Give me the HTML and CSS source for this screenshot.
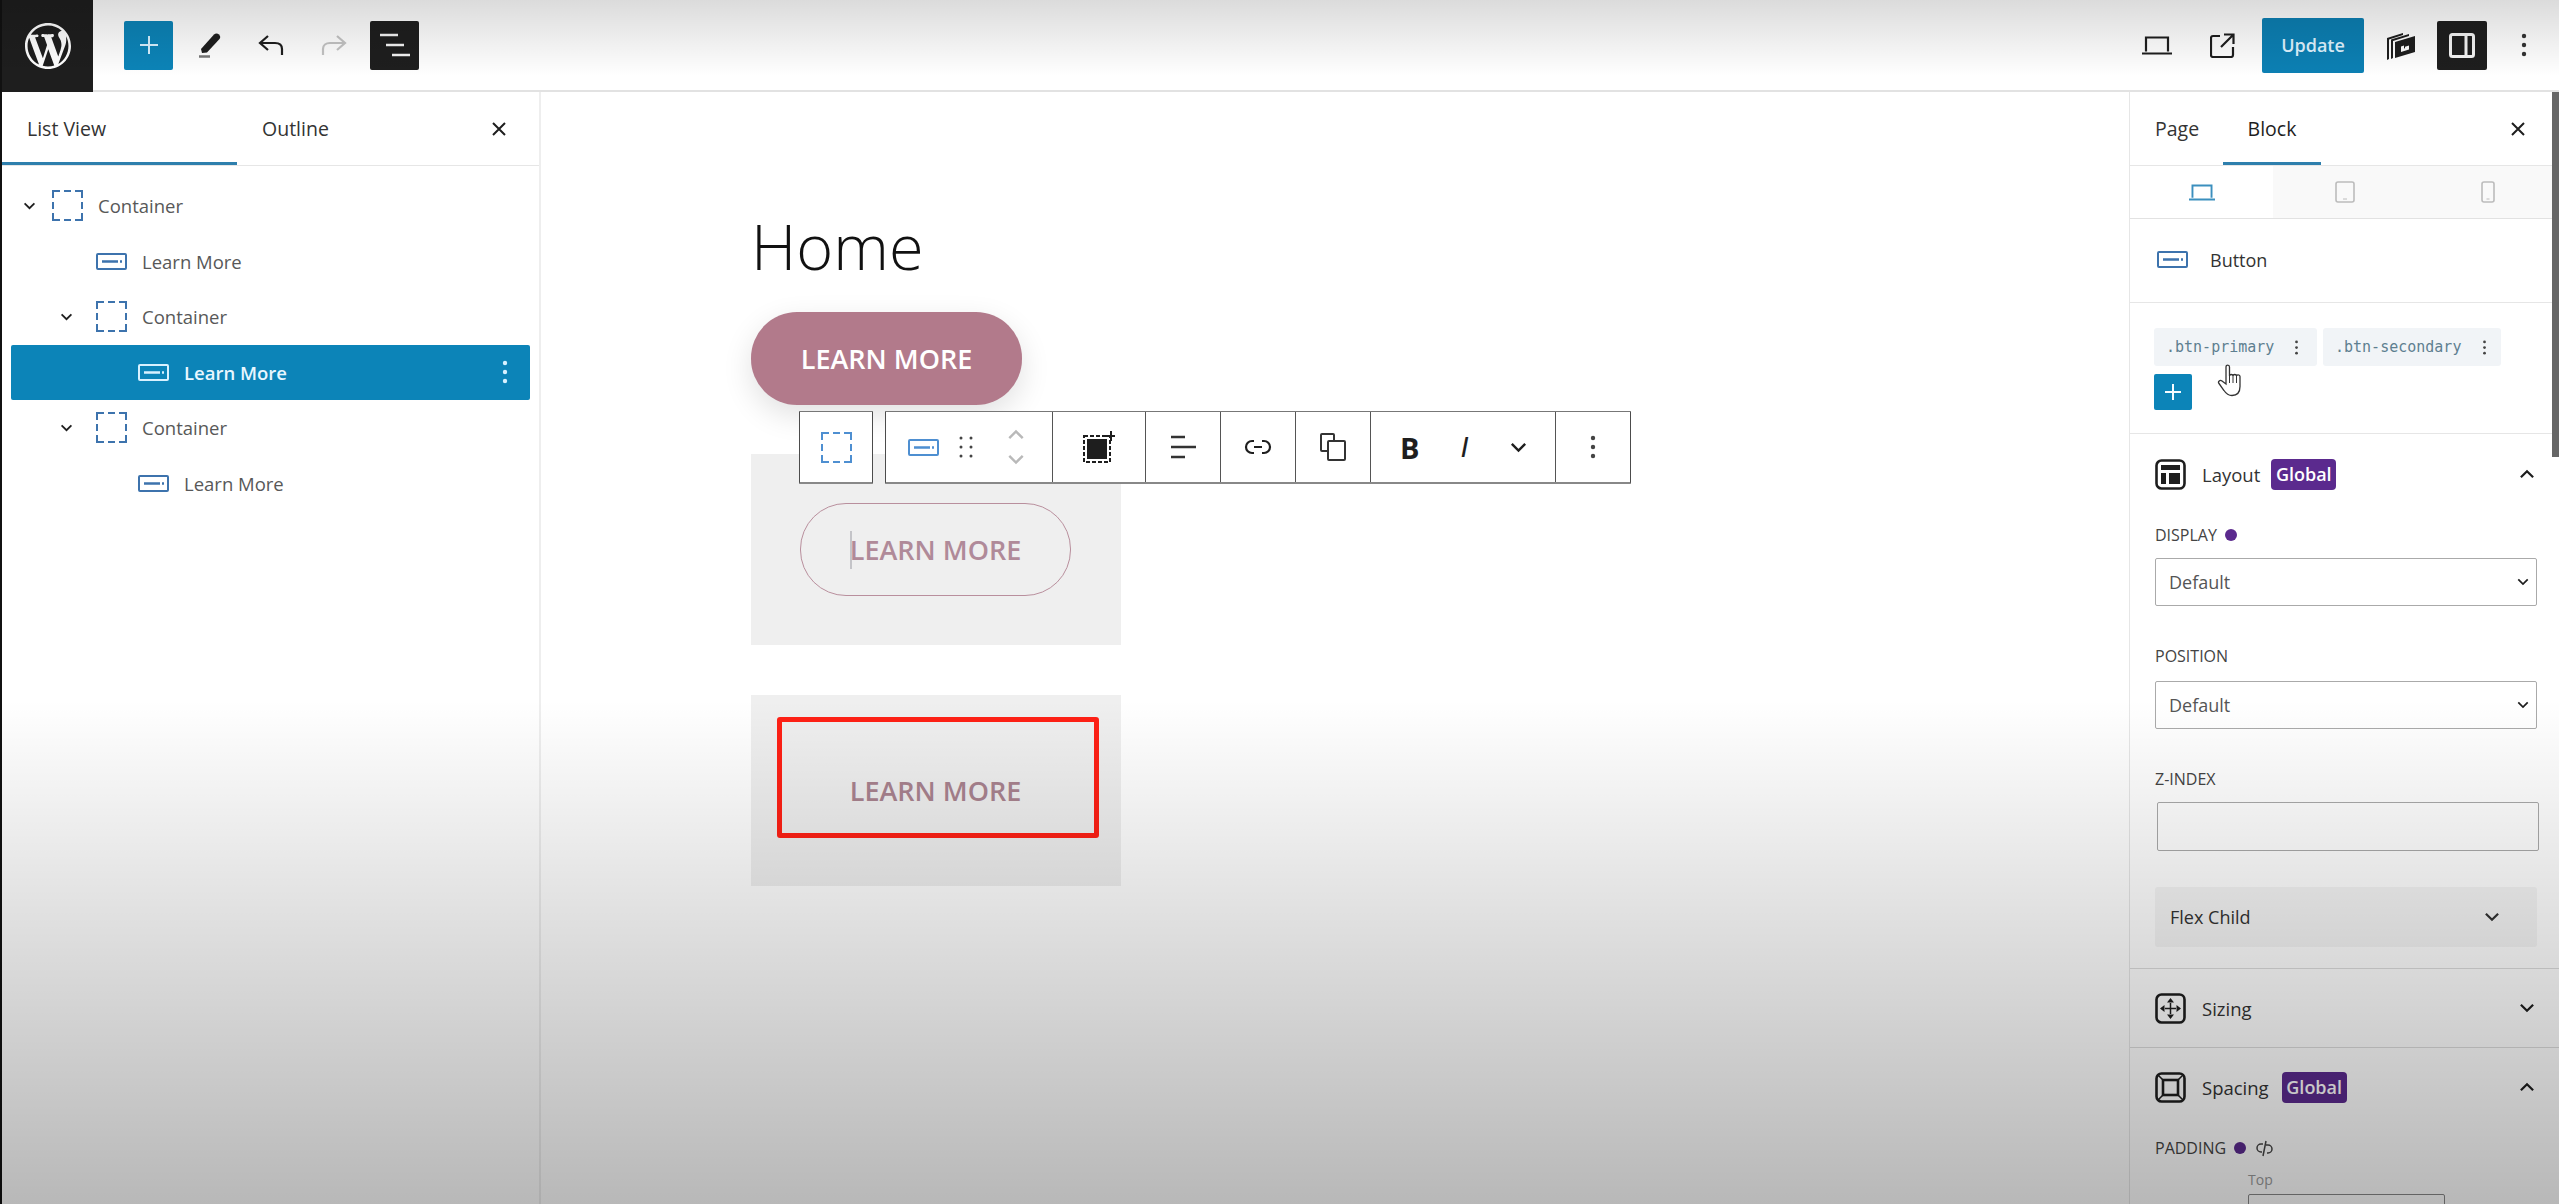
FILE: index.html
```html
<!DOCTYPE html>
<html lang="en">
<head>
    <meta charset="UTF-8">
    <title>Edit Page</title>
    <link rel="stylesheet" href="styles.css">
</head>
<body>
    <svg class="defs" width="0" height="0">
        <symbol id="i-container" viewBox="0 0 31 31">
            <path d="M1 8V1h7M12 1h7M23 1h7v7M30 12v7M30 23v7h-7M19 30h-7M8 30H1v-7M1 19v-7" fill="none" stroke="currentColor" stroke-width="2"/>
        </symbol>
        <symbol id="i-button" viewBox="0 0 31 17">
            <rect x="1" y="1" width="29" height="15" rx="1" fill="none" stroke="currentColor" stroke-width="2"/>
            <path d="M6 8.5h16M24 8.5h2" fill="none" stroke="currentColor" stroke-width="2.4"/>
        </symbol>
        <symbol id="i-down" viewBox="0 0 14 9">
            <path d="M1.5 1.5 7 7l5.500-5.500" fill="none" stroke="currentColor" stroke-width="2"/>
        </symbol>
        <symbol id="i-up" viewBox="0 0 14 9">
            <path d="M1.500 7.500 7 2l5.500 5.500" fill="none" stroke="currentColor" stroke-width="2"/>
        </symbol>
        <symbol id="i-close" viewBox="0 0 16 16">
            <path d="M2 2l12 12M14 2 2 14" fill="none" stroke="currentColor" stroke-width="2"/>
        </symbol>
        <symbol id="i-dots" viewBox="0 0 6 24">
            <circle cx="3" cy="3" r="2.200" fill="currentColor"/>
            <circle cx="3" cy="12" r="2.200" fill="currentColor"/>
            <circle cx="3" cy="21" r="2.200" fill="currentColor"/>
        </symbol>
        <symbol id="i-laptop" viewBox="0 0 30 19">
            <path d="M4 15.500V1.500h22v14M0 17.500h30" fill="none" stroke="currentColor" stroke-width="2.200"/>
        </symbol>
    </svg>

    <div class="app">
        <header class="topbar">
            <div class="wp-logo">
                <svg width="46" height="46" viewBox="0 0 20 20"><path fill="#fff" d="M20 10c0-5.510-4.490-10-10-10C4.480 0 0 4.490 0 10c0 5.520 4.480 10 10 10 5.510 0 10-4.480 10-10zM7.780 15.370L4.370 6.220c.550-.020 1.170-.080 1.170-.080.500-.060.440-1.130-.060-1.110 0 0-1.450.110-2.370.110-.180 0-.370 0-.580-.010C4.120 2.690 6.870 1.110 10 1.110c2.330 0 4.450.870 6.050 2.340-.680-.110-1.650.390-1.650 1.580 0 .740.450 1.360.900 2.100.350.610.550 1.360.550 2.460 0 1.490-1.400 5-1.400 5l-3.030-8.370c.540-.020.820-.170.820-.170.500-.050.440-1.250-.060-1.220 0 0-1.440.120-2.380.120-.870 0-2.330-.120-2.330-.120-.500-.030-.560 1.200-.060 1.220l.920.080 1.260 3.410zM17.410 10c.240-.640.740-1.870.430-4.250.700 1.290 1.050 2.710 1.050 4.250 0 3.290-1.730 6.240-4.400 7.780.970-2.590 1.940-5.200 2.920-7.780zM6.100 18.090C3.120 16.650 1.110 13.530 1.110 10c0-1.300.230-2.480.720-3.590C3.250 10.300 4.670 14.200 6.100 18.090zm4.030-6.630l2.580 6.980c-.860.290-1.760.450-2.710.450-.790 0-1.570-.110-2.290-.330.810-2.380 1.620-4.740 2.420-7.100z"/></svg>
            </div>
            <div class="bar-btn add-btn">
                <svg width="20" height="20" viewBox="0 0 20 20"><path d="M10 1v18M1 10h18" stroke="#d8f1ff" stroke-width="2"/></svg>
            </div>
            <div class="bar-icon pencil">
                <svg width="24" height="26" viewBox="0 0 24 26"><path d="M2 17 15 2.500c1.500-1.500 3.500-1.500 5 0s1.500 3 .5 4.500L8 20.500l-5 .5z" fill="#1e1e1e"/><path d="M0 24.500h11" stroke="#777" stroke-width="2.500"/></svg>
            </div>
            <div class="bar-icon undo">
                <svg width="26" height="22" viewBox="0 0 26 22"><path d="M10 2 2 9l8 7M2 9h15c4 0 7 2 7 6v6" fill="none" stroke="#1e1e1e" stroke-width="2.200"/></svg>
            </div>
            <div class="bar-icon redo">
                <svg width="26" height="22" viewBox="0 0 26 22"><path d="M16 2l8 7-8 7M24 9H9c-4 0-7 2-7 6v6" fill="none" stroke="#c4c4c4" stroke-width="2.200"/></svg>
            </div>
            <div class="bar-btn list-btn">
                <svg width="30" height="24" viewBox="0 0 30 24"><path d="M0 2h18M6 12h18M12 22h18" stroke="#f4f4f4" stroke-width="2.400"/></svg>
            </div>

            <div class="bar-right">
                <div class="bar-icon laptop">
                    <svg width="30" height="19"><use href="#i-laptop"/></svg>
                </div>
                <div class="bar-icon external">
                    <svg width="25" height="25" viewBox="0 0 25 25"><path d="M10 3H3c-1 0-2 1-2 2v17c0 1 1 2 2 2h18c1 0 2-1 2-2v-8M11 14 23 2M14 1.500h9.500V11" fill="none" stroke="#1e1e1e" stroke-width="2.200"/></svg>
                </div>
                <div class="update-btn">Update</div>
                <div class="bar-icon gs-logo">
                    <svg width="28" height="30" viewBox="0 0 28 30"><path d="M0 8 16 3v2L2 9.500V29l-2 1zM4 9.500 22 4v2L6 11v17l-2 1z" fill="#1e1e1e"/><path fill-rule="evenodd" d="M8 12 28 6v16L8 28zM14 16.500v5.500l8-2.500v-4l-4 1.200v1.500l-1 .3v-3z" fill="#1e1e1e"/></svg>
                </div>
                <div class="bar-btn side-btn">
                    <svg width="26" height="25" viewBox="0 0 26 25"><rect x="1.500" y="1.500" width="23" height="22" rx="2" fill="none" stroke="#f4f4f4" stroke-width="3"/><path d="M17 2v21" stroke="#f4f4f4" stroke-width="3"/></svg>
                </div>
                <div class="bar-icon more">
                    <svg width="6" height="26"><use href="#i-dots"/></svg>
                </div>
            </div>
        </header>

        <div class="workspace">
            <aside class="list-panel">
                <div class="tabs list-tabs">
                    <div class="tab tab-list active">List View</div>
                    <div class="tab tab-outline">Outline</div>
                    <svg class="tab-close" width="16" height="16"><use href="#i-close"/></svg>
                </div>
                <ul class="tree">
                    <li class="tree-row lv0">
                        <svg class="caret" width="13" height="8" viewBox="0 0 14 9"><use href="#i-down"/></svg>
                        <svg class="node-icon" width="31" height="31"><use href="#i-container"/></svg>
                        <span>Container</span>
                    </li>
                    <li class="tree-row lv1-leaf">
                        <svg class="node-icon" width="31" height="17"><use href="#i-button"/></svg>
                        <span>Learn More</span>
                    </li>
                    <li class="tree-row lv1">
                        <svg class="caret" width="13" height="8" viewBox="0 0 14 9"><use href="#i-down"/></svg>
                        <svg class="node-icon" width="31" height="31"><use href="#i-container"/></svg>
                        <span>Container</span>
                    </li>
                    <li class="tree-row lv2-leaf selected">
                        <svg class="node-icon" width="31" height="17"><use href="#i-button"/></svg>
                        <span>Learn More</span>
                        <svg class="row-more" width="6" height="24"><use href="#i-dots"/></svg>
                    </li>
                    <li class="tree-row lv1">
                        <svg class="caret" width="13" height="8" viewBox="0 0 14 9"><use href="#i-down"/></svg>
                        <svg class="node-icon" width="31" height="31"><use href="#i-container"/></svg>
                        <span>Container</span>
                    </li>
                    <li class="tree-row lv2-leaf">
                        <svg class="node-icon" width="31" height="17"><use href="#i-button"/></svg>
                        <span>Learn More</span>
                    </li>
                </ul>
            </aside>

            <main class="canvas">
                <h1 class="page-title">Home</h1>
                <div class="btn-primary">LEARN MORE</div>
                <div class="demo-box">
                    <div class="btn-secondary"><i class="text-caret"></i>LEARN MORE</div>
                </div>
                <div class="demo-box">
                    <div class="btn-plain">LEARN MORE</div>
                    <div class="red-mark"></div>
                </div>

                <div class="block-toolbar">
                    <div class="tool-group parent-group">
                        <svg class="tb-blue" width="31" height="31"><use href="#i-container"/></svg>
                    </div>
                    <div class="tool-group main-group">
                        <div class="tool move-tool">
                            <svg class="tb-blue" width="31" height="17"><use href="#i-button"/></svg>
                            <svg width="14" height="22" viewBox="0 0 14 22"><g fill="#444"><circle cx="2" cy="2" r="1.500"/><circle cx="12" cy="2" r="1.500"/><circle cx="2" cy="11" r="1.500"/><circle cx="12" cy="11" r="1.500"/><circle cx="2" cy="20" r="1.500"/><circle cx="12" cy="20" r="1.500"/></g></svg>
                            <div class="mover">
                                <svg width="18" height="11" viewBox="0 0 14 9"><use href="#i-up"/></svg>
                                <svg width="18" height="11" viewBox="0 0 14 9"><use href="#i-down"/></svg>
                            </div>
                        </div>
                        <div class="tool layout-tool">
                            <svg width="32" height="32" viewBox="0 0 32 32"><rect x="1" y="5" width="26" height="26" fill="none" stroke="#1e1e1e" stroke-width="2" stroke-dasharray="4 2"/><rect x="4" y="8" width="20" height="20" fill="#1e1e1e"/><path d="M28 0v10M23 5h9" stroke="#1e1e1e" stroke-width="2"/></svg>
                        </div>
                        <div class="tool align-tool">
                            <svg width="26" height="24" viewBox="0 0 26 24"><path d="M1 2h14M1 12h25M1 22h14" stroke="#333" stroke-width="2.400"/></svg>
                        </div>
                        <div class="tool link-tool">
                            <svg width="28" height="16" viewBox="0 0 28 16"><path d="M10 2H8a6 6 0 0 0 0 12h2M18 2h2a6 6 0 0 1 0 12h-2M10 8h8" fill="none" stroke="#1e1e1e" stroke-width="2.200"/></svg>
                        </div>
                        <div class="tool copy-tool">
                            <svg width="26" height="28" viewBox="0 0 26 28"><path d="M8 18H2c-.6 0-1-.4-1-1V2c0-.6.4-1 1-1h11c.6 0 1 .4 1 1v6" fill="none" stroke="#333" stroke-width="2"/><rect x="8" y="8" width="17" height="19" rx="1" fill="none" stroke="#333" stroke-width="2"/></svg>
                        </div>
                        <div class="tool format-tool">
                            <span class="fmt-b">B</span>
                            <span class="fmt-i">I</span>
                            <svg width="17" height="11" viewBox="0 0 14 9"><use href="#i-down"/></svg>
                        </div>
                        <div class="tool end-tool">
                            <svg width="6" height="24"><use href="#i-dots"/></svg>
                        </div>
                    </div>
                </div>
            </main>

            <aside class="side-panel">
                <div class="tabs side-tabs">
                    <div class="tab tab-page">Page</div>
                    <div class="tab tab-block active">Block</div>
                    <svg class="tab-close" width="16" height="16"><use href="#i-close"/></svg>
                </div>
                <div class="devices">
                    <div class="device current"><svg width="26" height="17"><use href="#i-laptop"/></svg></div>
                    <div class="device">
                        <svg width="20" height="22" viewBox="0 0 20 22"><rect x="1" y="1" width="18" height="20" rx="2" fill="none" stroke="currentColor" stroke-width="1.600"/><path d="M8 18h4" stroke="currentColor"/></svg>
                    </div>
                    <div class="device">
                        <svg width="14" height="22" viewBox="0 0 14 22"><rect x="1" y="1" width="12" height="20" rx="2" fill="none" stroke="currentColor" stroke-width="1.600"/><path d="M5.500 18h3" stroke="currentColor"/></svg>
                    </div>
                </div>
                <div class="block-name">
                    <svg width="31" height="17"><use href="#i-button"/></svg>
                    <span>Button</span>
                </div>
                <section class="classes">
                    <div class="chips">
                        <div class="chip chip-primary"><span>.btn-primary</span><svg width="5" height="15" viewBox="0 0 6 24"><use href="#i-dots"/></svg></div>
                        <div class="chip chip-secondary"><span>.btn-secondary</span><svg width="5" height="15" viewBox="0 0 6 24"><use href="#i-dots"/></svg></div>
                    </div>
                    <div class="chip-add">
                        <svg width="16" height="16" viewBox="0 0 16 16"><path d="M8 0v16M0 8h16" stroke="#f4fbff" stroke-width="2"/></svg>
                    </div>
                </section>
                <section class="group layout-group">
                    <div class="group-head">
                        <svg width="31" height="31" viewBox="0 0 31 31"><rect x="1.500" y="1.500" width="28" height="28" rx="5" fill="none" stroke="#1e1e1e" stroke-width="2.600"/><path d="M6 6h19v5H6zM6 14h5v11H6zM14 14h11v11H14z" fill="#1e1e1e"/></svg>
                        <span class="group-title">Layout</span>
                        <span class="badge">Global</span>
                        <svg class="group-caret" width="16" height="10" viewBox="0 0 14 9"><use href="#i-up"/></svg>
                    </div>
                    <div class="field-label display-label">DISPLAY <i class="dot"></i></div>
                    <div class="select"><span>Default</span><svg width="12" height="8" viewBox="0 0 14 9"><use href="#i-down"/></svg></div>
                    <div class="field-label">POSITION</div>
                    <div class="select position-select"><span>Default</span><svg width="12" height="8" viewBox="0 0 14 9"><use href="#i-down"/></svg></div>
                    <div class="field-label">Z-INDEX</div>
                    <div class="text-input"></div>
                    <div class="flex-child"><span>Flex Child</span><svg width="16" height="10" viewBox="0 0 14 9"><use href="#i-down"/></svg></div>
                </section>
                <section class="group sizing-group">
                    <div class="group-head">
                        <svg width="31" height="31" viewBox="0 0 31 31"><rect x="1.500" y="1.500" width="28" height="28" rx="5" fill="none" stroke="#1e1e1e" stroke-width="2.600"/><path d="M15.500 10v11M10 15.500h11" stroke="#1e1e1e" stroke-width="1.500"/><path d="M15.500 5l-3.500 4.500h7zM15.500 26l-3.500-4.500h7zM5 15.500l4.500-3.500v7zM26 15.500l-4.500-3.500v7z" fill="#1e1e1e"/></svg>
                        <span class="group-title">Sizing</span>
                        <svg class="group-caret" width="16" height="10" viewBox="0 0 14 9"><use href="#i-down"/></svg>
                    </div>
                </section>
                <section class="group spacing-group">
                    <div class="group-head">
                        <svg width="31" height="31" viewBox="0 0 31 31"><rect x="1.500" y="1.500" width="28" height="28" rx="5" fill="none" stroke="#1e1e1e" stroke-width="2.600"/><rect x="8" y="8" width="15" height="15" fill="none" stroke="#1e1e1e" stroke-width="2.600"/><path d="M3 3l5 5M28 3l-5 5M3 28l5-5M28 28l-5-5" stroke="#1e1e1e" stroke-width="1.500"/></svg>
                        <span class="group-title">Spacing</span>
                        <span class="badge">Global</span>
                        <svg class="group-caret" width="16" height="10" viewBox="0 0 14 9"><use href="#i-up"/></svg>
                    </div>
                    <div class="field-label padding-label">PADDING <i class="dot"></i>
                        <svg width="17" height="17" viewBox="0 0 17 17"><path d="M7 4H5a4 4 0 0 0 0 8h1M10 5h2a4 4 0 0 1 0 8h-1M10 1 7 16" fill="none" stroke="#444" stroke-width="1.500"/></svg>
                    </div>
                    <div class="box-top">
                        <div class="box-label">Top</div>
                        <div class="box-input"></div>
                    </div>
                </section>
                <div class="panel-scroll"></div>
            </aside>
        </div>
    </div>

    <svg class="hand" width="28" height="34" viewBox="0 0 28 34"><path d="M9 20V3c0-2.500 3.500-2.500 3.500 0v9c0-2 3.500-2 3.500 0 0-2 3.500-2 3.500 0 0-1.500 3.500-1.500 3.500.5v10c0 6-3 9-8 9-4 0-6-2-8-5l-5-7c-1.500-2 1-4 3-2.500z" fill="#fff" stroke="#333" stroke-width="1.300"/><path d="M12.500 12v7M16 12v7M19.500 12v7" stroke="#333" stroke-width="1"/></svg>
    <div class="video-shade"></div>
</body>
</html>
```

FILE: styles.css
```css
* {
    box-sizing: border-box;
}
html, body {
    margin: 0;
    padding: 0;
    height: 100%;
    overflow: hidden;
}
body {
    font-family: "Open Sans", "Liberation Sans", sans-serif;
    color: #1e1e1e;
    background-color: #fff;
    position: relative;
}
.defs {
    position: absolute;
}
.app {
    height: 1204px;
    display: flex;
    flex-direction: column;
    border-left: 2px solid #111;
}

/* top bar */
.topbar {
    height: 92px;
    flex: none;
    display: flex;
    align-items: center;
    border-bottom: 2px solid #e2e2e2;
    background-color: #fff;
}
.wp-logo {
    width: 91px;
    height: 92px;
    margin-bottom: -2px;
    background-color: #1e1e1e;
    display: flex;
    align-items: center;
    justify-content: center;
    flex: none;
}
.bar-btn {
    width: 49px;
    height: 49px;
    border-radius: 2px;
    display: flex;
    align-items: center;
    justify-content: center;
    flex: none;
}
.bar-icon {
    width: 40px;
    height: 49px;
    display: flex;
    align-items: center;
    justify-content: center;
    flex: none;
}
.add-btn {
    margin-left: 31px;
    background-color: #0c84b8;
}
.pencil {
    margin-left: 18px;
}
.undo {
    margin-left: 20px;
}
.redo {
    margin-left: 23px;
}
.list-btn {
    margin-left: 16px;
    background-color: #1e1e1e;
}
.bar-right {
    margin-left: auto;
    padding-right: 20px;
    display: flex;
    align-items: center;
}
.external {
    margin-left: 25px;
}
.update-btn {
    width: 102px;
    height: 55px;
    margin-left: 20px;
    background-color: #0c80b4;
    color: #dff3ff;
    border-radius: 2px;
    font-size: 18px;
    font-weight: 600;
    display: flex;
    align-items: center;
    justify-content: center;
}
.gs-logo {
    margin-left: 17px;
}
.side-btn {
    width: 50px;
    margin-left: 16px;
    background-color: #1e1e1e;
}
.more {
    width: 30px;
    margin-left: 22px;
    color: #333;
}

/* panels */
.workspace {
    flex: 1;
    display: flex;
    min-height: 0;
}
.list-panel {
    width: 539px;
    flex: none;
    border-right: 2px solid #eeeeee;
}
.tabs {
    height: 74px;
    display: flex;
    align-items: center;
    position: relative;
    border-bottom: 1px solid #e6e6e6;
    font-size: 19.500px;
}
.tab {
    height: 100%;
    display: flex;
    align-items: center;
    padding-top: 2px;
    color: #333;
    border-bottom: 3px solid transparent;
}
.tab.active {
    border-bottom-color: #2e7fad;
}
.tab-list {
    width: 235px;
    padding-left: 25px;
}
.tab-outline {
    padding-left: 25px;
}
.tab-close {
    position: absolute;
    top: 29px;
    color: #1e1e1e;
}
.list-tabs .tab-close {
    left: 489px;
}
.side-tabs .tab-close {
    left: 380px;
}
.tree {
    list-style: none;
    margin: 0;
    padding: 12px 9px 0 9px;
}
.tree-row {
    height: 55.5px;
    display: flex;
    align-items: center;
    font-size: 18.5px;
    color: #585858;
    border-radius: 2px;
}
.tree-row .node-icon {
    color: #3d73ad;
    flex: none;
    margin-right: 15px;
}
.caret {
    flex: none;
    color: #1e1e1e;
}
.lv0 {
    padding-left: 12px;
}
.lv0 .caret {
    margin-right: 16px;
}
.lv1 {
    padding-left: 49px;
}
.lv1 .caret {
    margin-right: 23px;
}
.lv1-leaf {
    padding-left: 85px;
}
.lv2-leaf {
    padding-left: 127px;
}
.tree-row.selected {
    background-color: #0c84b8;
    color: #e8f7ff;
    font-weight: 600;
}
.tree-row.selected .node-icon {
    color: #d8f1ff;
}
.row-more {
    margin-left: auto;
    margin-right: 22px;
    color: #d8f1ff;
}

/* canvas */
.canvas {
    flex: 1;
    position: relative;
    padding: 0 0 0 210px;
}
.page-title {
    margin: 0;
    height: 220px;
    padding-top: 116px;
    font-size: 63px;
    font-weight: 300;
    line-height: 76px;
    color: #111;
}
.btn-primary,
.btn-secondary,
.btn-plain {
    width: 271px;
    height: 93px;
    border-radius: 46px;
    font-size: 27px;
    display: flex;
    align-items: center;
    justify-content: center;
    position: relative;
    font-weight: 600;
}
.btn-primary {
    background-color: #b27a8b;
    color: #fff;
    box-shadow: 0 10px 30px rgba(0, 0, 0, 0.12);
}
.btn-secondary {
    border: 1px solid #b98f9d;
    color: #b08a99;
}
.btn-plain {
    color: #a9838f;
}
.text-caret {
    position: absolute;
    left: 49px;
    top: 27px;
    width: 2px;
    height: 38px;
    background-color: #c4c4c8;
}
.demo-box {
    width: 370px;
    height: 191px;
    margin-top: 49px;
    padding: 49px 0 0 49px;
    background-color: #efefef;
    position: relative;
}
.demo-box + .demo-box {
    margin-top: 50px;
}
.red-mark {
    position: absolute;
    left: 26px;
    top: 22px;
    width: 322px;
    height: 121px;
    border: 5px solid #ff2015;
    border-radius: 3px;
}

/* floating block toolbar */
.block-toolbar {
    position: absolute;
    left: 258px;
    top: 319px;
    display: flex;
    gap: 12px;
    height: 73px;
}
.tool-group {
    display: flex;
    align-items: center;
    background-color: #fff;
    border: 1px solid #4c4c4c;
    border-top-color: #777;
    border-bottom: 2px solid #888;
    border-radius: 1px;
}
.parent-group {
    width: 74px;
    justify-content: center;
}
.main-group {
    width: 746px;
}
.tb-blue {
    color: #4e8fd1;
}
.tool {
    height: 100%;
    display: flex;
    align-items: center;
    justify-content: center;
    border-right: 1px solid #555;
    flex: none;
}
.move-tool {
    width: 167px;
    justify-content: flex-start;
    padding-left: 22px;
    gap: 20px;
}
.mover {
    display: flex;
    flex-direction: column;
    gap: 14px;
    margin-left: 14px;
    color: #b9b9b9;
}
.layout-tool {
    width: 93px;
}
.align-tool,
.link-tool,
.copy-tool {
    width: 75px;
}
.format-tool {
    width: 185px;
    justify-content: flex-start;
    padding-left: 29px;
}
.fmt-b {
    font-size: 29px;
    font-weight: 700;
    line-height: 1;
}
.fmt-i {
    margin-left: 41px;
    margin-right: 41px;
    font-size: 29px;
    line-height: 1;
    font-style: italic;
    font-family: "Liberation Sans", sans-serif;
}
.end-tool {
    flex: 1;
    border-right: none;
    color: #444;
}

/* settings sidebar */
.side-panel {
    width: 430px;
    flex: none;
    border-left: 1px solid #e6e6e6;
    position: relative;
}
.tab-page {
    padding-left: 25px;
    width: 93px;
}
.tab-block {
    width: 98px;
    justify-content: center;
    color: #1e1e1e;
}
.devices {
    height: 53px;
    display: flex;
    border-bottom: 1px solid #e2e2e2;
}
.device {
    flex: 1;
    display: flex;
    align-items: center;
    justify-content: center;
    background-color: #f9f9f9;
    color: #bcbcbc;
}
.device.current {
    background-color: #fff;
    color: #3b8fbe;
}
.block-name {
    height: 84px;
    display: flex;
    align-items: center;
    gap: 22px;
    padding-left: 27px;
    padding-bottom: 2px;
    font-size: 18px;
    color: #333;
    border-bottom: 1px solid #e6e6e6;
}
.block-name svg {
    color: #3d73ad;
}
.classes {
    height: 131px;
    padding: 25px 0 0 24px;
    border-bottom: 1px solid #e6e6e6;
}
.chips {
    display: flex;
    gap: 6px;
}
.chip {
    height: 38px;
    display: flex;
    align-items: center;
    padding-left: 12px;
    background-color: #f1f4f7;
    border-radius: 3px;
    font-family: "DejaVu Sans Mono", "Liberation Mono", monospace;
    font-size: 15px;
    color: #5e7f90;
}
.chip svg {
    color: #444;
    margin-left: auto;
}
.chip-primary {
    width: 163px;
    padding-right: 18px;
}
.chip-secondary {
    width: 178px;
    padding-right: 14px;
}
.chip-add {
    width: 38px;
    height: 36px;
    margin-top: 8px;
    border-radius: 2px;
    background-color: #0c84b8;
    display: flex;
    align-items: center;
    justify-content: center;
}
.group {
    padding: 0 21px 0 25px;
    border-bottom: 1px solid #ddd;
}
.group-head {
    height: 78px;
    display: flex;
    align-items: center;
    font-size: 18.5px;
    color: #333;
}
.group-title {
    margin-left: 16px;
}
.badge {
    margin-left: 11px;
    height: 31px;
    width: 65px;
    display: flex;
    align-items: center;
    justify-content: center;
    background-color: #5b2a8e;
    color: #fff;
    font-size: 18px;
    font-weight: 600;
    border-radius: 4px;
}
.spacing-group .badge {
    margin-left: 13px;
}
.group-caret {
    margin-left: auto;
    margin-right: 3px;
    color: #1e1e1e;
}
.layout-group {
    height: 535px;
    padding-top: 1px;
}
.field-label {
    font-size: 16px;
    color: #444;
    line-height: 22px;
    display: flex;
    align-items: center;
    gap: 8px;
}
.layout-group .display-label {
    margin-top: 11px;
}
.dot {
    width: 12px;
    height: 12px;
    border-radius: 50%;
    background-color: #5b2a8e;
}
.select,
.text-input {
    width: 382px;
    height: 48px;
    margin: 12px 0 39px;
    background-color: #fff;
    border: 1px solid #aaa;
    border-radius: 2px;
}
.select {
    display: flex;
    align-items: center;
    justify-content: space-between;
    padding: 0 7px 0 13px;
    font-size: 18px;
    color: #555;
}
.position-select {
    margin-top: 14px;
}
.select svg {
    color: #1e1e1e;
}
.text-input {
    height: 49px;
    margin-left: 2px;
    margin-bottom: 36px;
    background-color: transparent;
}
.flex-child {
    width: 382px;
    height: 60px;
    display: flex;
    align-items: center;
    justify-content: space-between;
    padding: 0 37px 0 15px;
    background-color: #f5f5f5;
    border-radius: 3px;
    font-size: 18px;
    color: #333;
}
.sizing-group {
    height: 79px;
}
.spacing-group {
    border-bottom: none;
}
.padding-label {
    margin-top: 11px;
}
.padding-label svg {
    margin-left: 2px;
}
.box-top {
    margin: 12px 0 0 93px;
}
.box-label {
    font-size: 14px;
    line-height: 18px;
    color: #9a9a9a;
}
.box-input {
    width: 197px;
    height: 40px;
    margin-top: 5px;
    border: 1px solid #888;
    border-radius: 2px;
    background-color: #fff;
}
.panel-scroll {
    position: absolute;
    right: 0;
    top: 0;
    width: 7px;
    height: 365px;
    background-color: #666;
}

/* overlays on top of the page */
.hand {
    position: absolute;
    left: 2217px;
    top: 364px;
}
.video-shade {
    position: absolute;
    left: 0;
    top: 0;
    width: 100%;
    height: 100%;
    pointer-events: none;
    background:
        linear-gradient(to bottom, rgba(0, 0, 0, 0.14) 0, rgba(0, 0, 0, 0) 76px),
        linear-gradient(to bottom, rgba(0, 0, 0, 0) 700px, rgba(0, 0, 0, 0.13) 930px, rgba(0, 0, 0, 0.28) 1204px);
}
```
